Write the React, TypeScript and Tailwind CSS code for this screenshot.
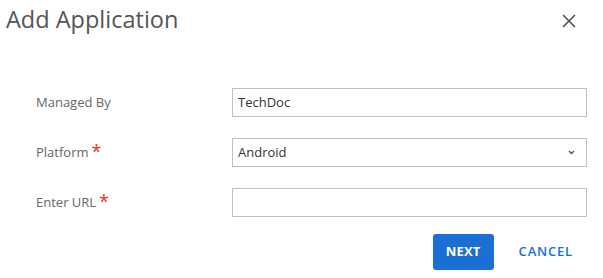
import React from "react";

export default function App() {
  const font = { fontFamily: '"Open Sans", "Noto Sans", sans-serif' };
  return (
    <div className="w-[603px] h-[278px] bg-white relative overflow-hidden" style={font}>
      <div className="flex items-start justify-between pl-[6px] pr-[26px] pt-[3px] h-[50px]">
        <h1 className="text-[23.5px] leading-[32px] text-[#555555] font-normal">Add Application</h1>
        <button className="mt-[10px] w-[16px] h-[16px] flex items-center justify-center text-[#555555]">
          <svg width="14" height="14" viewBox="0 0 14 14" fill="none" stroke="currentColor" strokeWidth="1.7" strokeLinecap="round">
            <path d="M1.5 1.5L12.5 12.5M12.5 1.5L1.5 12.5" />
          </svg>
        </button>
      </div>
      <div className="flex flex-col gap-[21px] pt-[38px] pl-[36px] pr-[16px]">
        <div className="flex items-center h-[29px]">
          <div className="w-[196px] text-[13px] text-[#666666]">Managed By</div>
          <div className="flex-1 h-[29px] border border-[#b8c2cc] flex items-center px-[5px] text-[13px] text-[#333333]">TechDoc</div>
        </div>
        <div className="flex items-center h-[29px]">
          <div className="w-[196px] text-[13px] text-[#666666] flex items-start">
            Platform<span className="text-[#d9391c] text-[18px] leading-[14px] ml-[3px] mt-[1px]">*</span>
          </div>
          <div className="flex-1 h-[29px] border border-[#b8c2cc] flex items-center justify-between pl-[5px] pr-[11px] text-[13px] text-[#333333]">
            <span>Android</span>
            <svg width="7" height="5" viewBox="0 0 7 5" fill="none" stroke="#555555" strokeWidth="1.4">
              <path d="M1 1L3.5 3.5L6 1" />
            </svg>
          </div>
        </div>
        <div className="flex items-center h-[29px]">
          <div className="w-[196px] text-[13px] text-[#666666] flex items-start">
            Enter URL<span className="text-[#d9391c] text-[18px] leading-[14px] ml-[3px] mt-[1px]">*</span>
          </div>
          <div className="flex-1 h-[29px] border border-[#b8c2cc]"></div>
        </div>
      </div>
      <div className="flex justify-end items-center gap-[10px] pt-[17px] pr-[15px]">
        <button className="w-[61px] h-[36px] rounded-[3px] bg-[#1a6fd4] text-white text-[13px] font-bold tracking-[0.2px]">NEXT</button>
        <button className="h-[36px] px-[15px] text-[#1a6fd4] text-[13px] font-semibold tracking-[0.8px]">CANCEL</button>
      </div>
    </div>
  );
}
